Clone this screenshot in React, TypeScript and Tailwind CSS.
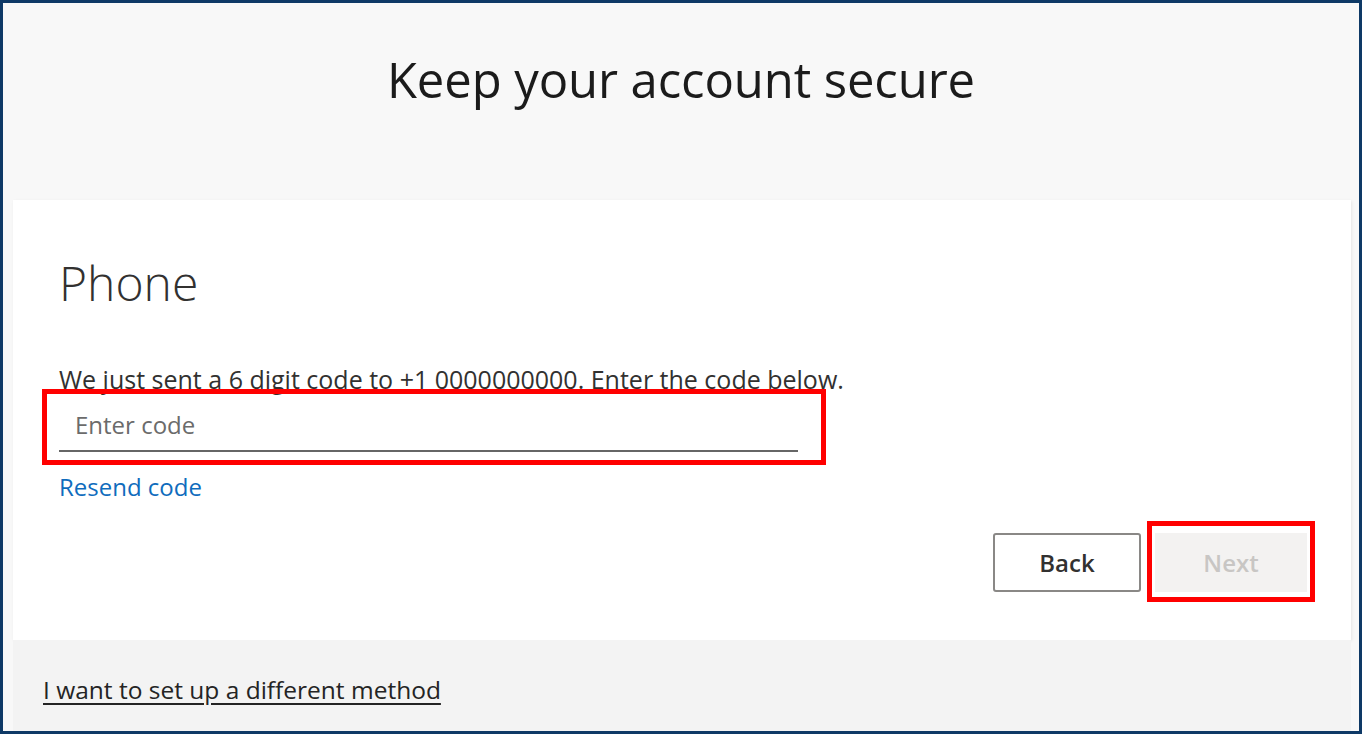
const font = { fontFamily: '"Open Sans", "Noto Sans", Arial, sans-serif' };

export default function App() {
  return (
    <div
      className="flex h-[734px] w-[1362px] flex-col border-[3px] border-[#0e3966] bg-[#f8f8f8] text-[#262626]"
      style={font}
    >
      {/* header */}
      <div className="flex h-[197px] shrink-0 justify-center pt-[44px]">
        <h1 className="text-[49px] leading-[64px] tracking-[-0.1px] text-[#1b1b1b]">Keep your account secure</h1>
      </div>

      {/* card */}
      <div className="ml-[10px] mr-[8px] h-[440px] shrink-0 bg-white pl-[46px] pr-[44px] pt-[52px] shadow-[1px_1px_3px_rgba(0,0,0,0.08)]">
        <h2 className="text-[48px] font-light leading-[62px] text-[#323130]">Phone</h2>
        <p className="mt-[50px] text-[25px] leading-[30px] text-[#323130]">
          We just sent a 6 digit code to +1 0000000000. Enter the code below.
        </p>

        <div className="relative mt-[10px] w-[739px]">
          <input
            className="h-[48px] w-full border-b-2 border-[#666] bg-transparent px-[16px] pb-[5px] text-[24px] outline-none placeholder:text-[#6b6b6b]"
            placeholder="Enter code"
          />
          <div className="pointer-events-none absolute -left-[17px] -right-[28px] -top-[15px] -bottom-[13px] border-[5px] border-[#ff0000]" />
        </div>

        <a href="#" className="mt-[20px] block w-fit text-[24px] leading-[30px] text-[#0f6cbd]">
          Resend code
        </a>

        <div className="mt-[31px] flex justify-end gap-[14px]">
          <button className="h-[59px] w-[148px] rounded-[3px] border-2 border-[#8a8886] bg-white text-[24px] font-semibold text-[#323130]">
            Back
          </button>
          <div className="relative">
            <button
              disabled
              className="h-[59px] w-[152px] bg-[#f3f2f1] text-[24px] font-semibold text-[#c8c6c4]"
            >
              Next
            </button>
            <div className="pointer-events-none absolute -left-[8px] -right-[8px] -top-[12px] -bottom-[10px] border-[5px] border-[#ff0000]" />
          </div>
        </div>
      </div>

      {/* footer */}
      <div className="ml-[10px] mr-[8px] flex flex-1 items-center bg-[#f3f3f3] pl-[30px] pt-[10px]">
        <a href="#" className="text-[24.5px] text-[#242424] underline underline-offset-[4px]">
          I want to set up a different method
        </a>
      </div>
    </div>
  );
}
